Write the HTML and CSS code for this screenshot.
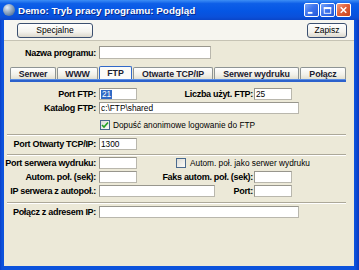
FILE: index.html
```html
<!DOCTYPE html>
<html lang="pl">
<head>
    <meta charset="UTF-8">
    <title>Demo: Tryb pracy programu: Podgląd</title>
    <link rel="stylesheet" href="styles.css">
</head>
<body>
<div class="window">
    <div class="titlebar">
        <span class="app-icon"></span>
        <span class="title">Demo: Tryb pracy programu: Podgląd</span>
        <div class="title-buttons">
            <span class="tbtn">
                <svg width="14" height="13" viewBox="0 0 14 13"><rect x="3" y="8" width="5" height="2" fill="#fff"/></svg>
            </span>
            <span class="tbtn">
                <svg width="14" height="13" viewBox="0 0 14 13"><rect x="3.5" y="3.5" width="7" height="6" fill="none" stroke="#fff"/><rect x="3" y="3" width="8" height="2" fill="#fff"/></svg>
            </span>
            <span class="tbtn tbtn-close">
                <svg width="14" height="13" viewBox="0 0 14 13"><path d="M4 3 L10 9 M10 3 L4 9" stroke="#fff" stroke-width="1.6"/></svg>
            </span>
        </div>
    </div>

    <div class="frame">
        <div class="toolbar">
            <button class="btn btn-special">Specjalne</button>
            <button class="btn btn-save">Zapisz</button>
        </div>

        <div class="row row-name">
            <label class="lbl">Nazwa programu:</label>
            <input class="field w-name" type="text">
        </div>

        <div class="tabs">
            <span class="tab t-serwer">Serwer</span>
            <span class="tab t-www">WWW</span>
            <span class="tab t-ftp active">FTP</span>
            <span class="tab t-tcp">Otwarte TCP/IP</span>
            <span class="tab t-print">Serwer wydruku</span>
            <span class="tab t-connect">Połącz</span>
        </div>
        <div class="tabline"></div>

        <div class="row row-first">
            <label class="lbl">Port FTP:</label>
            <div class="field w-short"><span class="selected">21</span></div>
            <label class="lbl2">Liczba użyt. FTP:</label>
            <input class="field w-short" type="text" value="25">
        </div>
        <div class="row">
            <label class="lbl">Katalog FTP:</label>
            <input class="field w-long" type="text" value="c:\FTP\shared">
        </div>
        <div class="row row-check">
            <span class="check checked">
                <svg width="8" height="8" viewBox="0 0 8 8"><path d="M1 4 L3 6 L7 1.5" fill="none" stroke="#21a121" stroke-width="1.6"/></svg>
            </span>
            <span class="check-text">Dopuść anonimowe logowanie do FTP</span>
        </div>

        <div class="sep"></div>

        <div class="row row-tcp">
            <label class="lbl">Port Otwarty TCP/IP:</label>
            <input class="field w-short" type="text" value="1300">
        </div>

        <div class="sep sep-2"></div>

        <div class="row row-print">
            <label class="lbl">Port serwera wydruku:</label>
            <input class="field w-short" type="text">
            <span class="check check-auto"></span>
            <span class="check-text">Autom. poł. jako serwer wydruku</span>
        </div>
        <div class="row">
            <label class="lbl">Autom. poł. (sek):</label>
            <input class="field w-short" type="text">
            <label class="lbl2">Faks autom. poł. (sek):</label>
            <input class="field w-short" type="text">
        </div>
        <div class="row">
            <label class="lbl">IP serwera z autopoł.:</label>
            <input class="field w-ip" type="text">
            <label class="lbl2 lbl-port">Port:</label>
            <input class="field w-short" type="text">
        </div>

        <div class="sep sep-3"></div>

        <div class="row row-connect">
            <label class="lbl">Połącz z adresem IP:</label>
            <input class="field w-long" type="text">
        </div>
    </div>
</div>
</body>
</html>
```

FILE: styles.css
```css
* {
    box-sizing: border-box;
}
body {
    margin: 0;
    font-family: "Liberation Sans", Arial, sans-serif;
    font-size: 8.3px;
    color: #000;
    background: #fff;
}
.window {
    width: 359px;
    height: 270px;
    display: flex;
    flex-direction: column;
    background: linear-gradient(90deg, #0a3fc8 0, #0c52dc 2px, #0c52dc 355px, #0838c0 359px);
}
.titlebar {
    height: 20px;
    display: flex;
    align-items: center;
    padding: 0 8px 0 3px;
    background: linear-gradient(#3d8ef5 0%, #0e5fe8 18%, #0556e4 55%, #0a50da 85%, #0a45c8 100%);
}
.app-icon {
    width: 12px;
    height: 12px;
    border-radius: 50%;
    background: radial-gradient(circle at 35% 30%, #e6eef8 0, #9fb4cc 35%, #5a7aa0 75%, #3f5f88 100%);
    margin-right: 3px;
}
.title {
    color: #fff;
    font-weight: bold;
    font-size: 9.9px;
    text-shadow: 1px 1px 0 #0b2a8a;
    flex: 1;
}
.title-buttons {
    display: flex;
    gap: 1px;
}
.tbtn {
    width: 15px;
    height: 14px;
    display: flex;
    align-items: center;
    justify-content: center;
    border: 1px solid #fff;
    border-radius: 2px;
    background: linear-gradient(135deg, #7aa6f8 0%, #3e74ee 45%, #2458d8 100%);
}
.tbtn-close {
    background: linear-gradient(135deg, #f0a085 0%, #e0603a 45%, #c8441c 100%);
}
.frame {
    flex: 1;
    margin: 0 5px 4px 4px;
    background: #ece9d8;
}
.toolbar {
    height: 21px;
    display: flex;
    align-items: center;
    justify-content: space-between;
    padding: 0 7px 0 13px;
    background: #f6f5ef;
    border-bottom: 1px solid #c6c3b4;
}
.btn {
    height: 15px;
    padding: 0;
    font-family: "Liberation Sans", Arial, sans-serif;
    font-size: 8.5px;
    color: #000;
    border: 1px solid #3c5070;
    border-radius: 3px;
    background: linear-gradient(#ffffff, #f4f3ee 60%, #dcd8cc);
}
.btn-special {
    width: 76px;
}
.btn-save {
    width: 40px;
}
.row {
    display: flex;
    align-items: center;
    height: 12px;
    margin-top: 2px;
}
.row-name {
    height: 13px;
    margin-top: 5px;
}
.lbl {
    width: 95px;
    padding-right: 3px;
    text-align: right;
    font-weight: bold;
    font-size: 9px;
    letter-spacing: -0.3px;
    white-space: nowrap;
}
.lbl2 {
    width: 117px;
    padding-right: 1px;
    text-align: right;
    font-weight: bold;
    font-size: 9px;
    letter-spacing: -0.3px;
    white-space: nowrap;
}
.lbl-port {
    width: 39px;
}
.field {
    height: 100%;
    margin: 0;
    padding: 0 1px;
    font-family: "Liberation Sans", Arial, sans-serif;
    font-size: 8.3px;
    color: #000;
    background: #fff;
    border: 1px solid #b9b7ad;
    border-top-color: #98968d;
    border-left-color: #98968d;
    outline: none;
    display: flex;
    align-items: center;
}
.selected {
    background: #316ac5;
    color: #fff;
    padding: 0 1px;
    line-height: 9px;
}
.w-name {
    width: 112px;
}
.w-short {
    width: 38px;
}
.w-long {
    width: 200px;
}
.w-ip {
    width: 116px;
}
.tabs {
    display: flex;
    align-items: flex-end;
    gap: 1px;
    height: 13px;
    margin: 7px 0 0 6px;
}
.tab {
    height: 12px;
    display: flex;
    align-items: center;
    justify-content: center;
    font-weight: bold;
    font-size: 8.8px;
    letter-spacing: -0.1px;
    color: #1c2030;
    border: 1px solid #8e9494;
    border-bottom: none;
    border-radius: 2px 2px 0 0;
    background: linear-gradient(#ffffff, #f2f1ea 60%, #e3e0d2);
}
.tab.active {
    height: 13px;
    border-color: #3168c8;
    background: #fbfbf8;
}
.t-serwer { width: 46px; }
.t-www { width: 41px; }
.t-ftp { width: 33px; }
.t-tcp { width: 80px; }
.t-print { width: 85px; }
.t-connect { width: 46px; }
.tabline {
    width: 336px;
    height: 3px;
    margin-left: 6px;
    background: #2c62cc;
    border-top: 1px solid #5b8ee4;
}
.row-first {
    margin-top: 6px;
}
.row-check {
    margin-top: 5px;
    padding-left: 96px;
}
.check {
    width: 10px;
    height: 10px;
    display: flex;
    align-items: center;
    justify-content: center;
    border: 1px solid #4a6a8e;
    background: linear-gradient(135deg, #dcdcd6, #fbfbf8);
    margin-right: 3px;
}
.check-auto {
    margin-left: 39px;
    margin-right: 4px;
}
.check-text {
    white-space: nowrap;
}
.sep {
    margin: 3px 8px 0 3px;
    height: 2px;
    border-top: 1px solid #aca899;
    border-bottom: 1px solid #fff;
}
.sep-2 {
    margin-top: 4px;
}
.sep-3 {
    margin-top: 5px;
}
.row-tcp {
    margin-top: 2px;
}
.row-print {
    margin-top: 1px;
}
.row-connect {
    margin-top: 2px;
}
```
